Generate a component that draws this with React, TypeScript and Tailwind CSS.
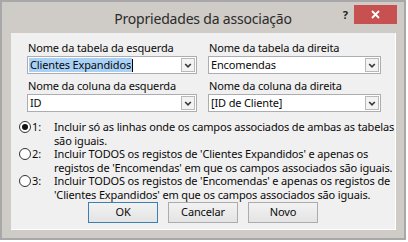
import { useState } from "react";

const FONT = { fontFamily: '"Noto Sans", "Open Sans", sans-serif' };

function Chevron() {
  return (
    <svg width="8" height="5" viewBox="0 0 8 5" fill="none">
      <path d="M1.2 1 L4 3.8 L6.8 1" stroke="#3a3a3a" strokeWidth="1.7" />
    </svg>
  );
}

function Combo({ value, selected }: { value: string; selected?: boolean }) {
  return (
    <div className="flex h-[18px] items-stretch border border-[#abadb3] bg-white">
      <div className="flex flex-1 items-center pl-[1px] leading-[14px]">
        {selected ? (
          <span className="flex items-center">
            <span className="bg-[#a9d1f5] px-[1px]">{value}</span>
            <span className="h-[13px] w-[1px] bg-black" />
          </span>
        ) : (
          <span className="px-[1px]">{value}</span>
        )}
      </div>
      <div className="m-[1px] flex w-[14px] items-center justify-center border border-[#b9b9b9] bg-[#f3f3f3]">
        <Chevron />
      </div>
    </div>
  );
}

function Radio({ checked, onClick }: { checked: boolean; onClick: () => void }) {
  return (
    <button
      onClick={onClick}
      className="flex h-[12px] w-[12px] items-center justify-center rounded-full border border-[#333] bg-white"
    >
      {checked && <span className="h-[6px] w-[6px] rounded-full bg-[#111]" />}
    </button>
  );
}

const OPTIONS = [
  ["Incluir só as linhas onde os campos associados de ambas as tabelas", "são iguais."],
  [
    "Incluir TODOS os registos de 'Clientes Expandidos' e apenas os",
    "registos de 'Encomendas' em que os campos associados são iguais.",
  ],
  [
    "Incluir TODOS os registos de 'Encomendas' e apenas os registos de",
    "'Clientes Expandidos' em que os campos associados são iguais.",
  ],
];

const BTN = "h-[21px] w-[70px] border bg-gradient-to-b from-[#f2f2f2] to-[#e4e4e4] text-[11px] tracking-[-0.15px] text-[#0a0a0a]";

export default function App() {
  const [choice, setChoice] = useState(0);

  return (
    <div className="h-[242px] w-[408px] bg-white" style={FONT}>
      <div className="flex h-[240px] w-[406px] flex-col border-2 border-[#a8a8a8] bg-[#cfcbc6]">
        {/* title bar */}
        <div className="grid h-[31px] shrink-0 grid-cols-[1fr_auto_1fr]">
          <div />
          <div className="pt-[7px] text-[14px] leading-[20px] tracking-[-0.2px] text-[#2b2b2b]">
            Propriedades da associação
          </div>
          <div className="flex items-start justify-end pr-[7px] pt-[3px]">
            <span className="mr-[6px] mt-[4px] text-[11px] font-bold leading-[12px] text-[#222]">?</span>
            <button className="flex h-[19px] w-[43px] items-center justify-center bg-[#c75050]">
              <svg width="9" height="9" viewBox="0 0 9 9">
                <path d="M1 1 L8 8 M8 1 L1 8" stroke="white" strokeWidth="1.8" />
              </svg>
            </button>
          </div>
        </div>

        {/* client area */}
        <div className="mb-[8px] ml-[9px] mr-[8px] flex flex-1 flex-col border-b border-r border-white bg-[#f0f0f0] pl-[16px] pt-[6px] text-[11px] tracking-[-0.15px] text-[#0a0a0a]">
          <div className="grid grid-cols-[170px_173px] gap-x-[11px]">
            <div className="flex flex-col">
              <label className="pl-[1px] leading-[17px]">Nome da tabela da esquerda</label>
              <Combo value="Clientes Expandidos" selected />
              <label className="mt-[3px] pl-[1px] leading-[17px]">Nome da coluna da esquerda</label>
              <Combo value="ID" />
            </div>
            <div className="flex flex-col">
              <label className="pl-[1px] leading-[17px]">Nome da tabela da direita</label>
              <Combo value="Encomendas" />
              <label className="mt-[3px] pl-[1px] leading-[17px]">Nome da coluna da direita</label>
              <Combo value="[ID de Cliente]" />
            </div>
          </div>

          <div className="-ml-[8px] mt-[8px] flex flex-col">
            {OPTIONS.map((lines, i) => (
              <div key={i} className="flex">
                <div className="flex h-[13.5px] w-[13px] shrink-0 items-center">
                  <Radio checked={choice === i} onClick={() => setChoice(i)} />
                </div>
                <div className="w-[22px] shrink-0 leading-[13.5px]">{i + 1}:</div>
                <div className="whitespace-nowrap leading-[13.5px]">
                  {lines[0]}
                  <br />
                  {lines[1]}
                </div>
              </div>
            ))}
          </div>

          <div className="mt-[1px] flex justify-center gap-[10px] pr-[16px]">
            <button className={`${BTN} border-[#3c7fb1]`}>OK</button>
            <button className={`${BTN} border-[#acacac]`}>Cancelar</button>
            <button className={`${BTN} border-[#acacac]`}>Novo</button>
          </div>
        </div>
      </div>
    </div>
  );
}
